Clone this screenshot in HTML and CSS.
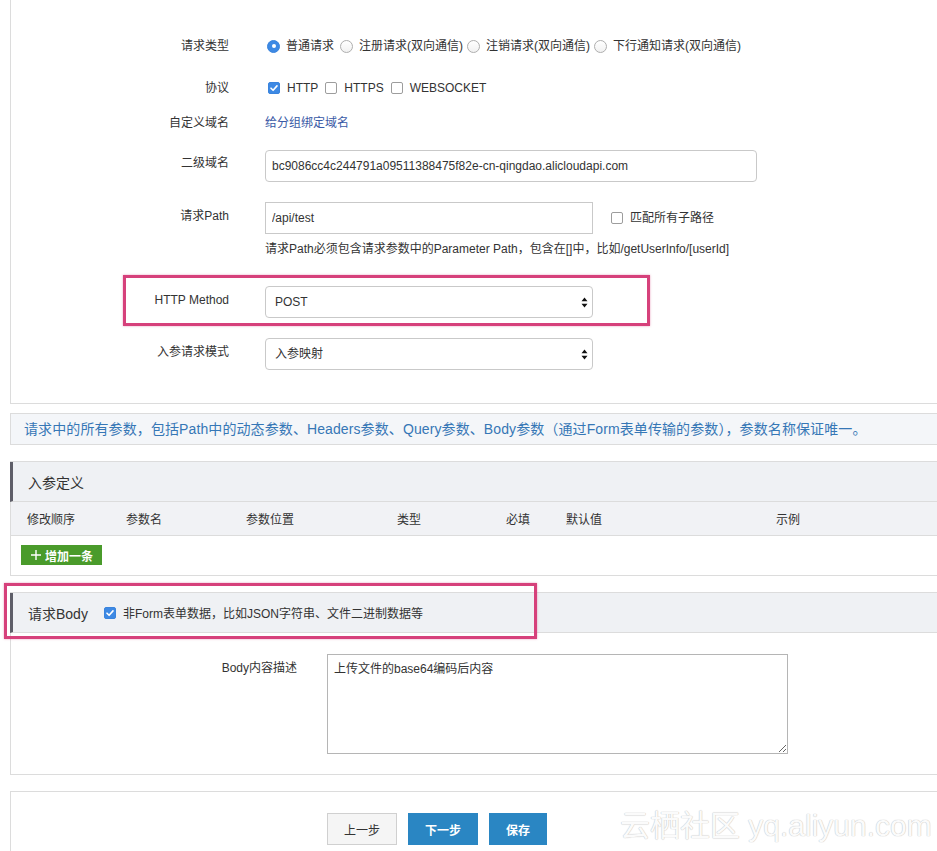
FILE: index.html
```html
<!DOCTYPE html>
<html lang="zh">
<head>
<meta charset="utf-8">
<title>API</title>
<link rel="stylesheet" href="styles.css">
</head>
<body>
<div class="page">
  <section class="panel basic">
    <div class="row r-type">
      <div class="label">请求类型</div>
      <div class="ctrl opts">
        <span class="opt first"><span class="radio on"></span>普通请求</span>
        <span class="opt"><span class="radio"></span>注册请求(双向通信)</span>
        <span class="opt"><span class="radio"></span>注销请求(双向通信)</span>
        <span class="opt"><span class="radio"></span>下行通知请求(双向通信)</span>
      </div>
    </div>
    <div class="row r-proto">
      <div class="label">协议</div>
      <div class="ctrl opts">
        <span class="opt first"><span class="check on"><svg viewBox="0 0 12 12" width="12" height="12"><path d="M3 6.2 L5.1 8.3 L9 3.9" fill="none" stroke="#fff" stroke-width="1.6" stroke-linecap="round" stroke-linejoin="round"/></svg></span>HTTP</span>
        <span class="opt"><span class="check"></span>HTTPS</span>
        <span class="opt"><span class="check"></span>WEBSOCKET</span>
      </div>
    </div>
    <div class="row r-domain">
      <div class="label">自定义域名</div>
      <div class="ctrl"><a class="link">给分组绑定域名</a></div>
    </div>
    <div class="row r-sub">
      <div class="label">二级域名</div>
      <div class="ctrl"><input class="input wide" type="text" value="bc9086cc4c244791a09511388475f82e-cn-qingdao.alicloudapi.com"></div>
    </div>
    <div class="row r-path">
      <div class="label">请求Path</div>
      <div class="ctrl">
        <div class="path-line">
          <input class="input path" type="text" value="/api/test">
          <span class="opt sub"><span class="check"></span>匹配所有子路径</span>
        </div>
        <div class="help">请求Path必须包含请求参数中的Parameter Path，包含在[]中，比如/getUserInfo/[userId]</div>
      </div>
    </div>
    <div class="row r-method">
      <div class="label">HTTP Method</div>
      <div class="ctrl">
        <div class="select"><span>POST</span><svg class="arrows" viewBox="0 0 7 11" width="7" height="11"><path d="M3.5 0.5 L6.5 4.3 L0.5 4.3 Z M3.5 10.5 L6.5 6.7 L0.5 6.7 Z" fill="#111"/></svg></div>
      </div>
    </div>
    <div class="row r-mode">
      <div class="label">入参请求模式</div>
      <div class="ctrl">
        <div class="select"><span>入参映射</span><svg class="arrows" viewBox="0 0 7 11" width="7" height="11"><path d="M3.5 0.5 L6.5 4.3 L0.5 4.3 Z M3.5 10.5 L6.5 6.7 L0.5 6.7 Z" fill="#111"/></svg></div>
      </div>
    </div>
  </section>

  <div class="info">请求中的所有参数，包括Path中的动态参数、Headers参数、Query参数、Body参数（通过Form表单传输的参数），参数名称保证唯一。</div>

  <section class="panel params">
    <div class="phead">入参定义</div>
    <div class="thead">
      <span>修改顺序</span><span>参数名</span><span>参数位置</span><span>类型</span><span>必填</span><span>默认值</span><span>示例</span>
    </div>
    <div class="addrow">
      <button class="btn-add"><svg viewBox="0 0 10 10" width="10" height="10"><path d="M5 0 V10 M0 5 H10" stroke="#fff" stroke-width="1.4"/></svg>增加一条</button>
    </div>
  </section>

  <section class="panel bodyp">
    <div class="phead bhead">
      <span class="btitle">请求Body</span>
      <span class="opt"><span class="check on"><svg viewBox="0 0 12 12" width="12" height="12"><path d="M3 6.2 L5.1 8.3 L9 3.9" fill="none" stroke="#fff" stroke-width="1.6" stroke-linecap="round" stroke-linejoin="round"/></svg></span>非Form表单数据，比如JSON字符串、文件二进制数据等</span>
    </div>
    <div class="brow">
      <div class="blabel">Body内容描述</div>
      <textarea class="ta">上传文件的base64编码后内容</textarea>
    </div>
  </section>

  <section class="panel foot">
    <button class="btn plain">上一步</button>
    <button class="btn blue">下一步</button>
    <button class="btn blue save">保存</button>
  </section>

  <div class="mark mark-method"></div>
  <div class="mark mark-body"></div>
  <div class="watermark">云栖社区 yq.aliyun.com</div>
</div>
</body>
</html>
```

FILE: styles.css
```css
* { box-sizing: border-box; }
html, body { margin: 0; padding: 0; background: #fff; }
body {
  font-family: "Liberation Sans", "Noto Sans CJK SC", sans-serif;
  font-size: 12px;
  color: #333;
  width: 937px;
  height: 851px;
  overflow: hidden;
}
.page { position: relative; padding-left: 10px; }

.panel { border: 1px solid #dcdcdc; border-right: 0; }

/* basic form */
.basic { border-top: 0; padding: 36px 0 33px; }
.row { display: flex; align-items: flex-start; }
.label {
  flex: none;
  width: 254px;
  padding-right: 36px;
  text-align: right;
  line-height: 20px;
}
.ctrl { line-height: 20px; }
.opts { display: flex; align-items: center; height: 20px; }
.opt { display: inline-flex; align-items: center; margin-right: 4px; white-space: nowrap; }
.opt.first { margin-left: 2px; margin-right: 6px; }
.r-proto .opt { margin-right: 7px; }
.r-proto .opt.first { margin-left: 3px; }

.radio {
  width: 13px; height: 13px; border-radius: 50%;
  border: 1px solid #aeaeae; background: linear-gradient(#fff, #f1f1f1);
  margin-right: 6px; position: relative; flex: none;
}
.radio.on { background: #3d89e4; border-color: #3a84dd; }
.radio.on::after {
  content: ""; position: absolute; left: 3.5px; top: 3.5px;
  width: 4px; height: 4px; border-radius: 50%; background: #fff;
}
.check {
  width: 12px; height: 12px; border-radius: 2px;
  border: 1px solid #9d9d9d; background: #fff;
  margin-right: 7px; flex: none; display: inline-block; position: relative;
}
.check.on { background: #3d89e4; border-color: #3a84dd; }
.check svg { position: absolute; left: -1px; top: -1px; }

.r-proto { margin-top: 22px; }
.r-domain { margin-top: 15px; }
.link { color: #3a5aa6; text-decoration: none; }

.r-sub { margin-top: 17px; }
.r-sub .label { padding-top: 3px; }
.input {
  height: 32px; border: 1px solid #c9c9c9; border-radius: 4px;
  font: inherit; font-size: 12px; color: #333; padding: 0 6px; outline: none;
  display: block;
}
.wide { width: 492px; }
.r-path { margin-top: 20px; }
.r-path .label { padding-top: 4px; }
.path-line { display: flex; align-items: center; }
.path { width: 328px; border-radius: 0; }
.opt.sub { margin-left: 18px; }
.help { margin-top: 6px; line-height: 18px; white-space: nowrap; font-family: "Liberation Sans", "Noto Sans CJK SC", sans-serif; }

.r-method { margin-top: 28px; }
.r-method .label, .r-mode .label { padding-top: 4px; }
.r-mode { margin-top: 20px; }
.select {
  width: 328px; height: 32px; border: 1px solid #c9c9c9; border-radius: 4px;
  display: flex; align-items: center; justify-content: space-between;
  padding: 0 4px 0 9px; background: #fff;
}
.arrows { display: block; }

/* info */
.info {
  margin-top: 9px;
  border: 1px solid #dcdcdc; border-right: 0;
  background: #f4f6f9;
  height: 32px; line-height: 30px;
  padding-left: 13px;
  font-size: 14px; color: #3677b6;
  white-space: nowrap;
  letter-spacing: 0.1px;
}

/* params */
.params { margin-top: 16px; }
.phead {
  height: 40px;
  margin-left: -1px;
  border-left: 3px solid #5e5e68;
  border-bottom: 1px solid #dcdcdc;
  background: #eff1f4;
  display: flex; align-items: center;
  padding-left: 15px;
  font-size: 14px; color: #333;
}
.thead {
  height: 34px;
  border-bottom: 1px solid #dcdcdc;
  background: #f1f2f5;
  display: grid;
  grid-template-columns: 99px 120px 151px 109px 60px 210px 1fr;
  align-items: center;
  padding-left: 16px;
}
.addrow { padding: 9px 0 10px 10px; }
.btn-add {
  height: 20px; width: 81px;
  border: 0; margin: 0; padding: 0 0 0 10px;
  background: #4a9b2b; color: #fff;
  font: inherit; font-size: 12px; font-weight: bold;
  display: flex; align-items: center;
}
.btn-add svg { margin-right: 4px; }

/* body */
.bodyp { margin-top: 16px; padding-bottom: 20px; }
.bhead { padding-left: 15px; }
.btitle { font-size: 14px; margin-right: 16px; }
.bhead .opt { font-size: 12px; }
.brow { display: flex; align-items: flex-start; padding-top: 21px; }
.blabel { flex: none; width: 316px; padding-right: 30px; text-align: right; line-height: 28px; }
.ta {
  width: 461px; height: 100px;
  border: 1px solid #b5b5b5; border-radius: 0;
  font: inherit; font-size: 12px; color: #333;
  padding: 4px 6px; margin: 0; resize: both; outline: none;
}

/* footer */
.foot { margin-top: 16px; padding: 21px 0 20px 316px; display: flex; gap: 11px; }
.btn {
  height: 32px; border: 1px solid #d0d0d0; margin: 0;
  font: inherit; font-size: 12px; padding: 0;
}
.btn.plain { width: 70px; background: #f5f5f5; color: #333; }
.btn.blue { width: 70px; background: #2a86c3; border-color: #2a86c3; color: #fff; font-weight: bold; }
.btn.save { width: 58px; }

/* annotation overlays */
.mark { position: absolute; border: 3px solid #d6417b; box-shadow: 0 0 2px rgba(214,65,123,0.5); }
.mark-method { left: 123px; top: 275px; width: 527px; height: 51px; }
.mark-body { left: 4px; top: 583px; width: 533px; height: 56px; }

.watermark {
  position: absolute; left: 620px; top: 808px;
  font-size: 30px; line-height: 36px; white-space: nowrap;
  color: #fbfbfb;
  text-shadow: 0 0 1px #c4c4c4, 0 0 1px #c4c4c4;
}
```
